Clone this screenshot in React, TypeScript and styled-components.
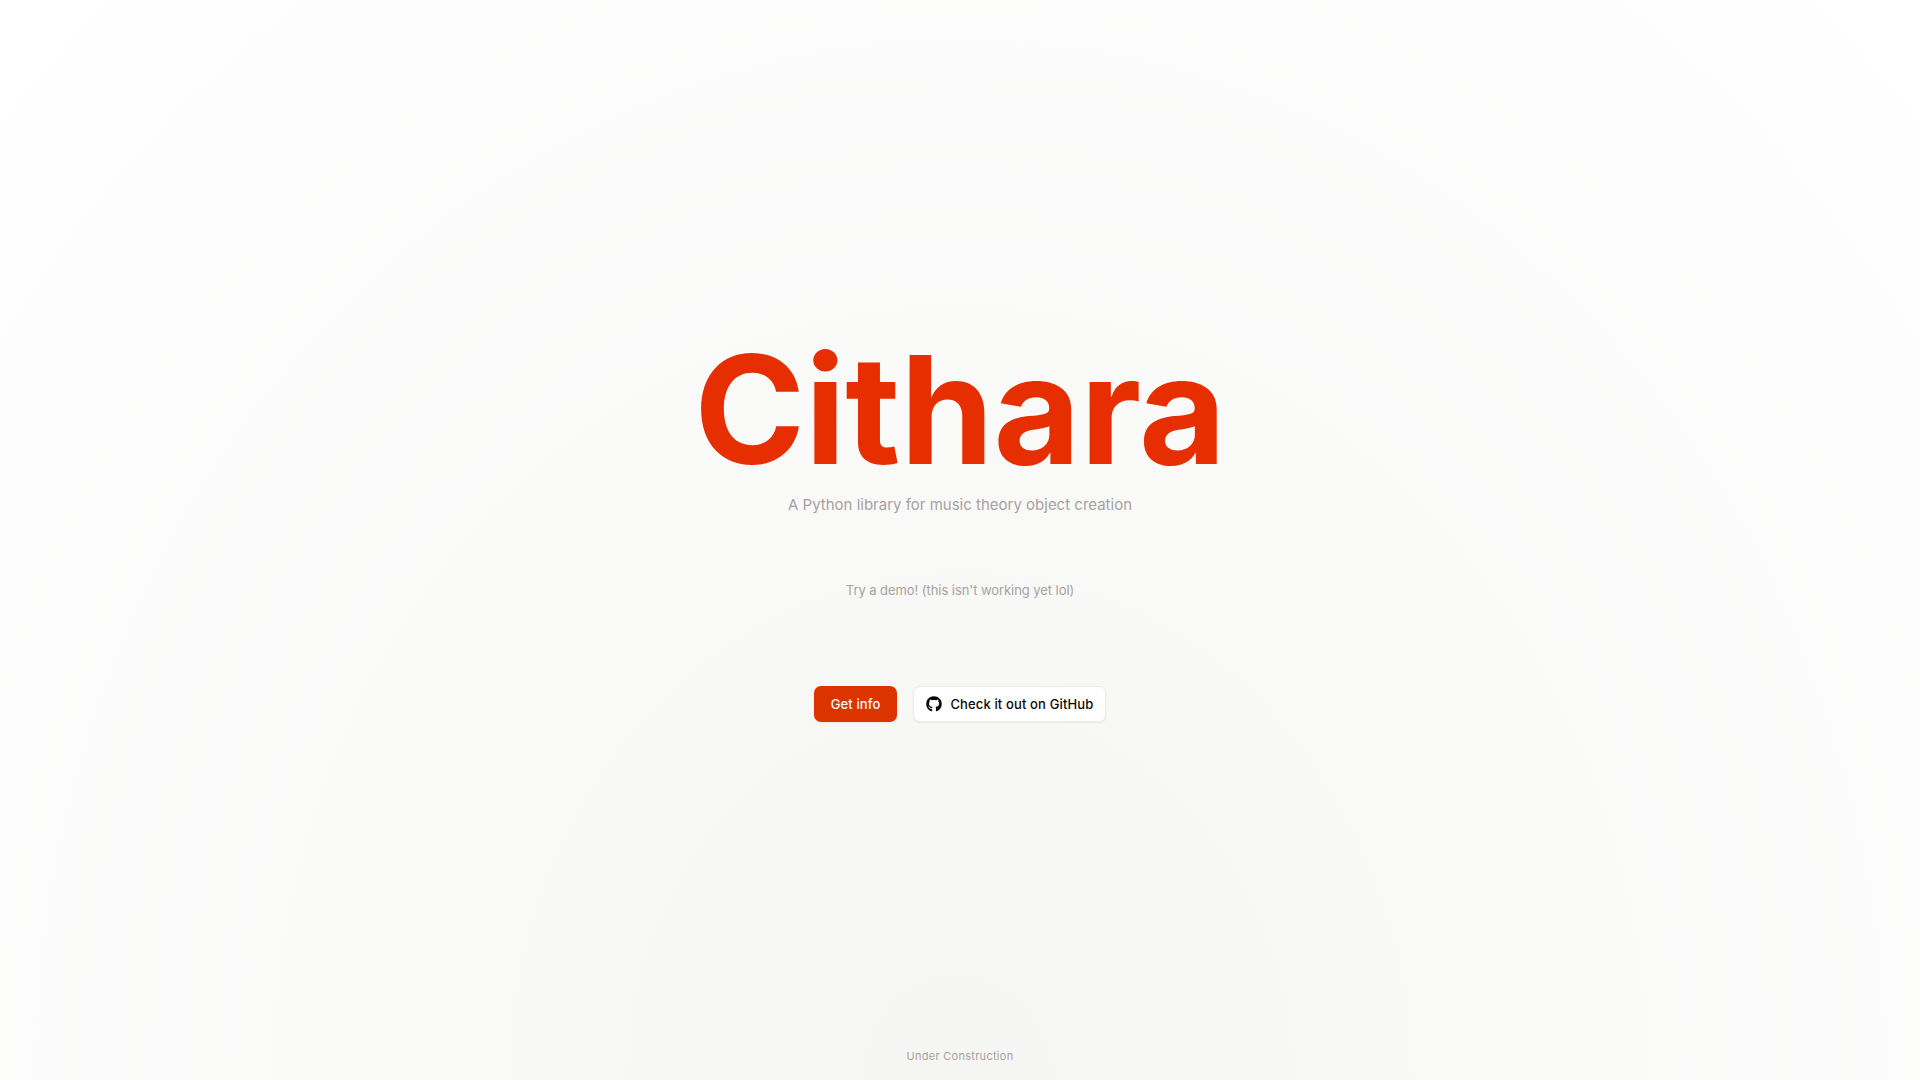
import React from "react";
import styled, { createGlobalStyle } from "styled-components";
import { FaGithub } from "react-icons/fa";

const Global = createGlobalStyle`
  html, body { margin: 0; padding: 0; height: 100%; }
  body { font-family: Inter, "Liberation Sans", sans-serif; }
`;

const Page = styled.main`
  box-sizing: border-box;
  height: 1080px;
  overflow: hidden;
  display: flex;
  flex-direction: column;
  align-items: center;
  padding-top: 327px;
  background: radial-gradient(ellipse at bottom, #f5f5f4, #ffffff);
`;

const Title = styled.h1`
  margin: 0;
  font-size: 150px;
  line-height: 166px;
  font-weight: 700;
  letter-spacing: -0.002em;
  color: #e62e00;
`;

const Subtitle = styled.p`
  margin: 0;
  font-size: 15px;
  line-height: 24px;
  color: #a8a29e;
`;

const DemoLabel = styled.p`
  margin: 63px 0 0;
  font-size: 13px;
  line-height: 20px;
  letter-spacing: -0.005em;
  color: #a8a29e;
`;

const Actions = styled.div`
  display: flex;
  gap: 16px;
  margin-top: 86px;
`;

const Button = styled.a<{ $primary?: boolean }>`
  box-sizing: border-box;
  height: 36px;
  display: inline-flex;
  align-items: center;
  gap: 8px;
  padding: 0 ${(p) => (p.$primary ? 17 : 12)}px;
  border-radius: 7px;
  font-size: 13px;
  font-weight: 500;
  letter-spacing: 0.01em;
  color: ${(p) => (p.$primary ? "#fafaf9" : "#0c0a09")};
  background: ${(p) => (p.$primary ? "#dc3400" : "#ffffff")};
  border: ${(p) => (p.$primary ? "none" : "1px solid #eeecea")};
  box-shadow: 0 1px 2px rgba(0, 0, 0, 0.06);
`;

const Footer = styled.footer`
  margin-top: auto;
  padding-bottom: 16px;
  font-size: 11px;
  line-height: 16px;
  letter-spacing: 0.025em;
  color: #a8a29e;
`;

export default function App() {
  return (
    <>
      <Global />
      <Page>
        <Title>Cithara</Title>
        <Subtitle>A Python library for music theory object creation</Subtitle>
        <DemoLabel>Try a demo! (this isn't working yet lol)</DemoLabel>
        <Actions>
          <Button $primary>Get info</Button>
          <Button>
            <FaGithub size={16} />
            Check it out on GitHub
          </Button>
        </Actions>
        <Footer>Under Construction</Footer>
      </Page>
    </>
  );
}
